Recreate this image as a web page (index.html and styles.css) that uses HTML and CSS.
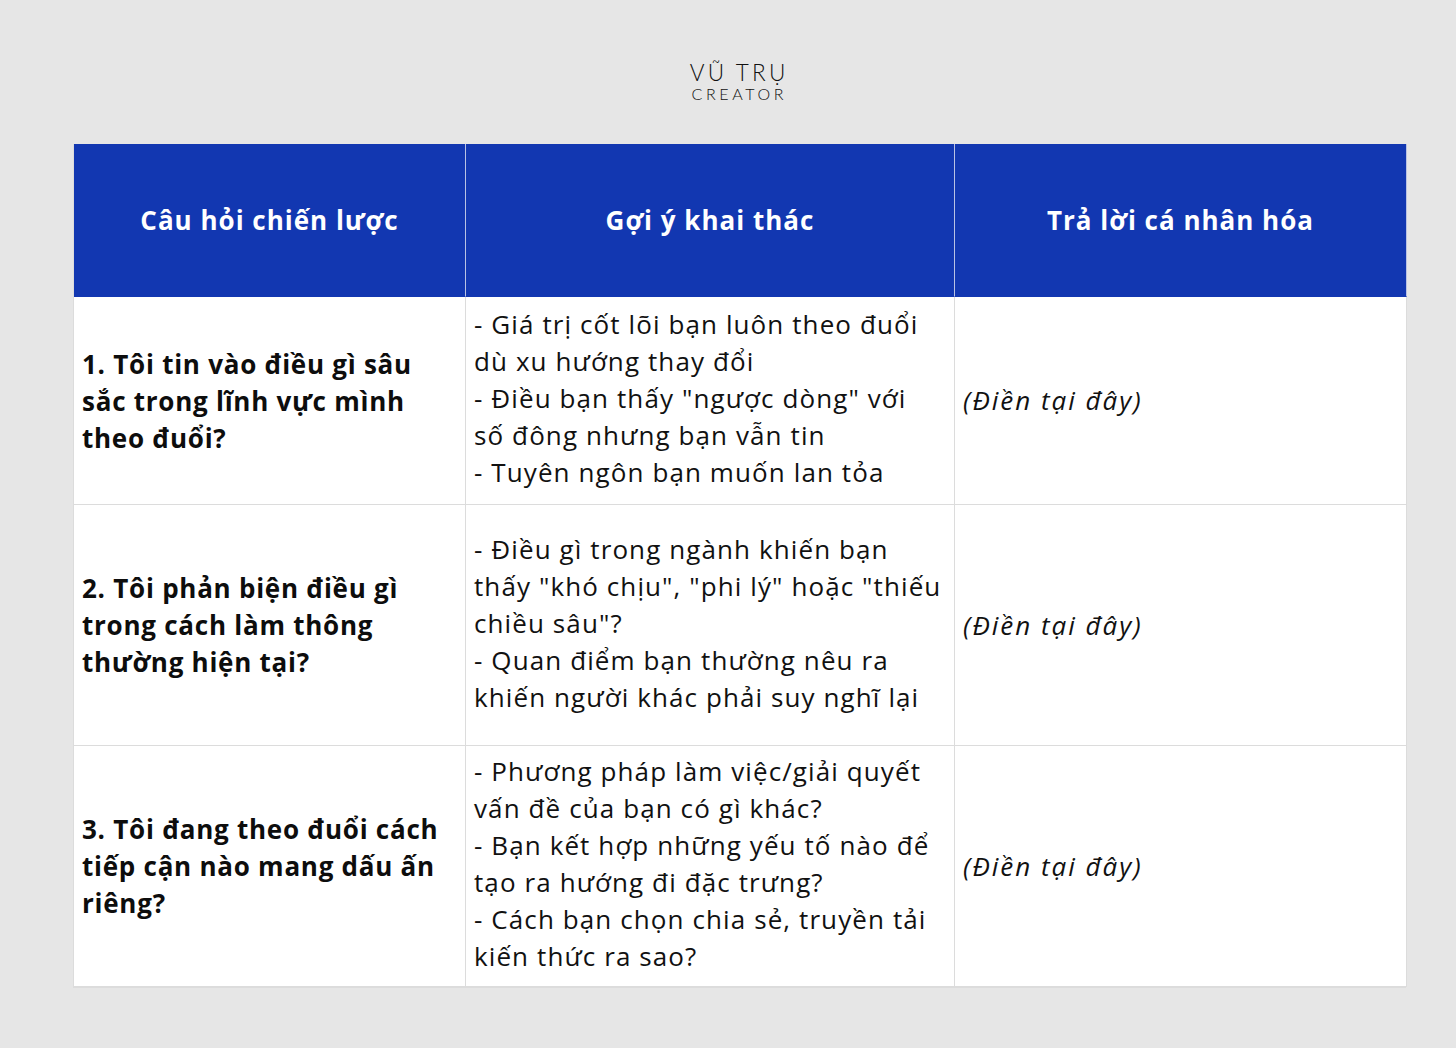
FILE: index.html
```html
<!DOCTYPE html>
<html lang="vi">
<head>
<meta charset="utf-8">
<link rel="stylesheet" href="styles.css">
</head>
<body>
<div class="page">
  <div class="logo">
    <div class="logo-top">VŨ TRỤ</div>
    <div class="logo-bottom">CREATOR</div>
  </div>
  <div class="table">
    <div class="cell head">Câu hỏi chiến lược</div>
    <div class="cell head">Gợi ý khai thác</div>
    <div class="cell head">Trả lời cá nhân hóa</div>

    <div class="cell q r1">1. Tôi tin vào điều gì sâu<br>sắc trong lĩnh vực mình<br>theo đuổi?</div>
    <div class="cell hint r1">- Giá trị cốt lõi bạn luôn theo đuổi<br>dù xu hướng thay đổi<br>- Điều bạn thấy "ngược dòng" với<br>số đông nhưng bạn vẫn tin<br>- Tuyên ngôn bạn muốn lan tỏa</div>
    <div class="cell ans r1">(Điền tại đây)</div>

    <div class="cell q r2">2. Tôi phản biện điều gì<br>trong cách làm thông<br>thường hiện tại?</div>
    <div class="cell hint r2">- Điều gì trong ngành khiến bạn<br>thấy "khó chịu", "phi lý" hoặc "thiếu<br>chiều sâu"?<br>- Quan điểm bạn thường nêu ra<br>khiến người khác phải suy nghĩ lại</div>
    <div class="cell ans r2">(Điền tại đây)</div>

    <div class="cell q r3">3. Tôi đang theo đuổi cách<br>tiếp cận nào mang dấu ấn<br>riêng?</div>
    <div class="cell hint r3">- Phương pháp làm việc/giải quyết<br>vấn đề của bạn có gì khác?<br>- Bạn kết hợp những yếu tố nào để<br>tạo ra hướng đi đặc trưng?<br>- Cách bạn chọn chia sẻ, truyền tải<br>kiến thức ra sao?</div>
    <div class="cell ans r3">(Điền tại đây)</div>
  </div>
</div>
</body>
</html>
```
FILE: styles.css
```css
* { box-sizing: border-box; }
html, body {
  margin: 0;
  padding: 0;
  background: #e6e6e6;
}
body {
  width: 1456px;
  height: 1048px;
  overflow: hidden;
  font-family: "Open Sans", "DejaVu Sans", sans-serif;
  color: #111;
}
.page {
  padding: 60px 50px 0 73px;
}
.logo {
  width: 140px;
  margin: 0 auto 42px auto;
  position: relative;
  left: -2px;
  text-align: center;
  font-family: "Lato", "DejaVu Sans", sans-serif;
  font-weight: 300;
  color: #111;
}
.logo-top {
  font-size: 22.5px;
  line-height: 26px;
  letter-spacing: 3.2px;
  margin-right: -3.2px;
}
.logo-bottom {
  font-size: 16px;
  line-height: 16px;
  letter-spacing: 3.6px;
  margin-right: -3.6px;
}
.table {
  display: grid;
  grid-template-columns: 392px 489px 452px;
  grid-template-rows: 153px 208px 241px 241px;
  width: 1333px;
  background: #fff;
  border-left: 1px solid #dcdcdc;
  border-bottom: 1px solid #dcdcdc;
}
.cell {
  border-right: 1px solid #dcdcdc;
  border-bottom: 1px solid #dcdcdc;
  display: flex;
  align-items: center;
  font-size: 26px;
  line-height: 37px;
}
.cell.head {
  background: #1237b1;
  color: #fff;
  font-weight: 700;
  letter-spacing: 1px;
  justify-content: center;
  border-right-color: #b9c2e4;
  border-bottom-color: #1237b1;
}
.cell.head:last-child { border-right-color: #1237b1; }
.cell.q {
  font-weight: 700;
  letter-spacing: 0.75px;
  padding-left: 8px;
  padding-top: 1px;
  color: #0d0d0d;
}
.cell.hint {
  padding-left: 8px;
  padding-bottom: 4px;
  font-weight: 400;
  letter-spacing: 1.1px;
}
.cell.ans {
  font-style: italic;
  letter-spacing: 2px;
  padding-left: 8px;
}
```
